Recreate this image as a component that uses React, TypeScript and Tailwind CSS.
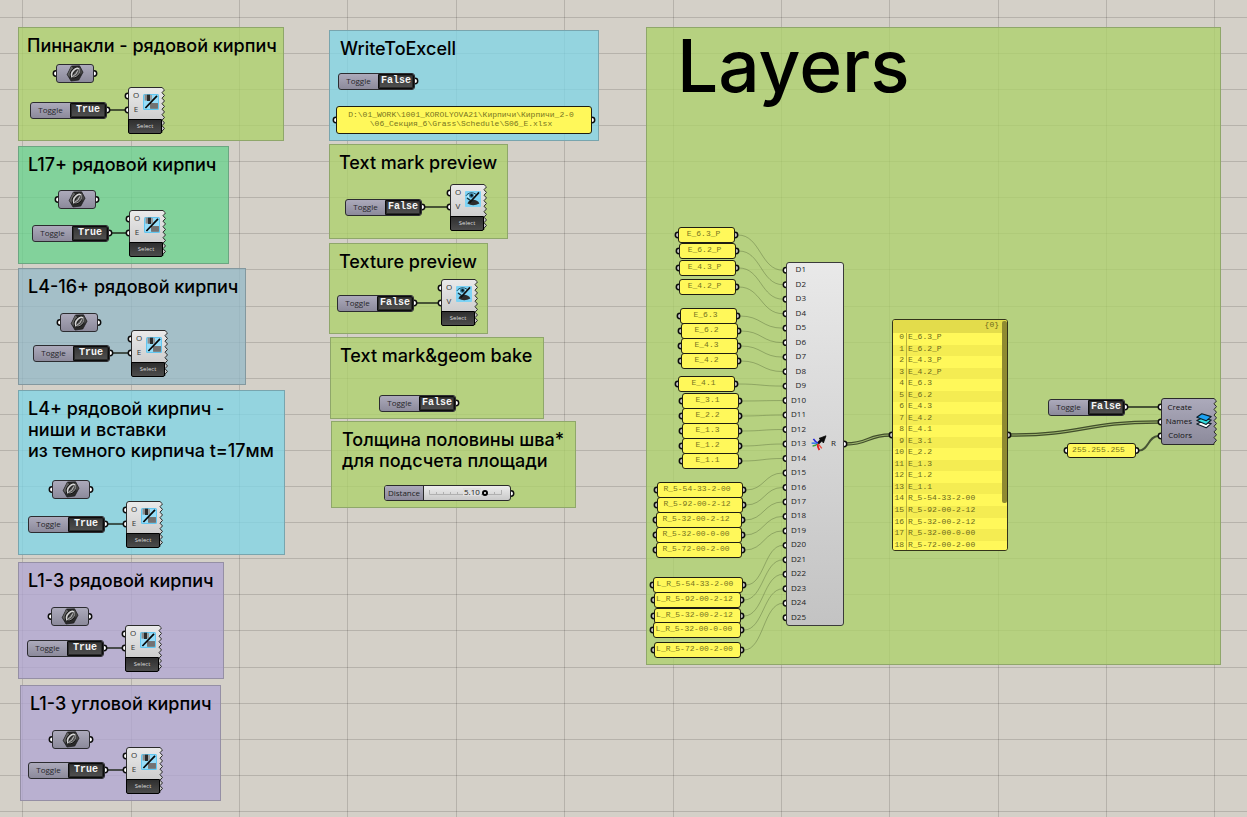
import { useState } from "react";

type Point = { x: number; y: number };
type Box = Point & { w: number; h: number };

const MONO = "font-['Liberation_Mono',monospace]";
const NODE_SANS = "font-['Open_Sans','Noto_Sans',sans-serif]";

const GREEN = "bg-[rgb(172,209,104)]/75 border-[#8fa76a]";
const AQUA = "bg-[rgb(127,213,231)]/75 border-[#78a5ae]";
const MINT = "bg-[rgb(103,211,140)]/75 border-[#6ba681]";
const STEEL = "bg-[rgb(148,185,200)]/75 border-[#83989f]";
const VIOLET = "bg-[rgb(176,165,211)]/75 border-[#958fa5]";

type Group = Box & { tone: string; pad: string; lines: string[] };

const groups: Group[] = [
  { x: 18, y: 27, w: 266, h: 114, tone: GREEN, pad: "pl-2", lines: ["Пиннакли - рядовой кирпич"] },
  { x: 18, y: 146, w: 211, h: 118, tone: MINT, pad: "pl-[9px]", lines: ["L17+ рядовой кирпич"] },
  { x: 18, y: 268, w: 228, h: 117, tone: STEEL, pad: "pl-[9px]", lines: ["L4-16+ рядовой кирпич"] },
  {
    x: 18, y: 390, w: 267, h: 165, tone: AQUA, pad: "pl-[9px]",
    lines: ["L4+ рядовой кирпич -", "ниши и вставки", "из темного кирпича t=17мм"],
  },
  { x: 18, y: 562, w: 206, h: 117, tone: VIOLET, pad: "pl-[9px]", lines: ["L1-3 рядовой кирпич"] },
  { x: 20, y: 685, w: 201, h: 116, tone: VIOLET, pad: "pl-[9px]", lines: ["L1-3 угловой кирпич"] },
  { x: 329, y: 30, w: 270, h: 111, tone: AQUA, pad: "pl-2.5", lines: ["WriteToExcell"] },
  { x: 329, y: 144, w: 179, h: 95, tone: GREEN, pad: "pl-[9px]", lines: ["Text mark preview"] },
  { x: 329, y: 243, w: 159, h: 91, tone: GREEN, pad: "pl-[9px]", lines: ["Texture preview"] },
  { x: 330, y: 337, w: 214, h: 82, tone: GREEN, pad: "pl-[9px]", lines: ["Text mark&geom bake"] },
  { x: 331, y: 421, w: 245, h: 87, tone: GREEN, pad: "pl-2.5", lines: ["Толщина половины шва*", "для подсчета площади"] },
];

const layersGroup: Box = { x: 646, y: 27, w: 575, h: 638 };

const TOGGLE = { w: 77, h: 17 };
const toggles: (Point & { on: boolean })[] = [
  { x: 30, y: 102, on: true },
  { x: 32, y: 225, on: true },
  { x: 33, y: 345, on: true },
  { x: 28, y: 516, on: true },
  { x: 27, y: 640, on: true },
  { x: 28, y: 762, on: true },
  { x: 338, y: 73, on: false },
  { x: 345, y: 199, on: false },
  { x: 337, y: 295, on: false },
  { x: 379, y: 395, on: false },
  { x: 1048, y: 399, on: false },
];

const GEOMETRY = { w: 38, h: 19 };
const geometryParams: Point[] = [
  { x: 56, y: 64 },
  { x: 58, y: 190 },
  { x: 60, y: 313 },
  { x: 52, y: 480 },
  { x: 51, y: 607 },
  { x: 52, y: 730 },
];

type Kind = "enable" | "preview";
const selectors: (Point & { kind: Kind; toggle: number })[] = [
  { x: 128, y: 87, kind: "enable", toggle: 0 },
  { x: 129, y: 210, kind: "enable", toggle: 1 },
  { x: 131, y: 330, kind: "enable", toggle: 2 },
  { x: 126, y: 501, kind: "enable", toggle: 3 },
  { x: 125, y: 625, kind: "enable", toggle: 4 },
  { x: 126, y: 747, kind: "enable", toggle: 5 },
  { x: 450, y: 184, kind: "preview", toggle: 7 },
  { x: 441, y: 279, kind: "preview", toggle: 8 },
];

const panels: (Point & { w: number; text: string })[] = [
  { x: 678, y: 227, w: 57, text: "E_6.3_P" },
  { x: 679, y: 243, w: 57, text: "E_6.2_P" },
  { x: 679, y: 260, w: 57, text: "E_4.3_P" },
  { x: 679, y: 279, w: 57, text: "E_4.2_P" },
  { x: 680, y: 308, w: 57, text: "E_6.3" },
  { x: 681, y: 323, w: 57, text: "E_6.2" },
  { x: 681, y: 338, w: 57, text: "E_4.3" },
  { x: 681, y: 353, w: 57, text: "E_4.2" },
  { x: 678, y: 376, w: 57, text: "E_4.1" },
  { x: 682, y: 393, w: 57, text: "E_3.1" },
  { x: 682, y: 408, w: 57, text: "E_2.2" },
  { x: 682, y: 423, w: 57, text: "E_1.3" },
  { x: 682, y: 438, w: 57, text: "E_1.2" },
  { x: 682, y: 453, w: 57, text: "E_1.1" },
  { x: 657, y: 482, w: 86, text: "R_5-54-33-2-00" },
  { x: 657, y: 497, w: 86, text: "R_5-92-00-2-12" },
  { x: 656, y: 512, w: 86, text: "R_5-32-00-2-12" },
  { x: 656, y: 527, w: 86, text: "R_5-32-00-0-00" },
  { x: 656, y: 542, w: 86, text: "R_5-72-00-2-00" },
  { x: 653, y: 577, w: 90, text: "L_R_5-54-33-2-00" },
  { x: 654, y: 592, w: 87, text: "L_R_5-92-00-2-12" },
  { x: 654, y: 608, w: 87, text: "L_R_5-32-00-2-12" },
  { x: 653, y: 622, w: 88, text: "L_R_5-32-00-0-00" },
  { x: 654, y: 642, w: 87, text: "L_R_5-72-00-2-00" },
];

const merge: Box = { x: 786, y: 262, w: 58, h: 364 };
const INPUTS = 25;
const inputY = (i: number) => merge.y + 1 + ((merge.h - 2) / INPUTS) * (i + 0.5);

const listPanel: Box = { x: 892, y: 319, w: 116, h: 232 };
const listItems = panels.slice(0, 19).map((p) => p.text);

const pathPanel: Box = { x: 336, y: 106, w: 256, h: 28 };
const colorPanel: Box = { x: 1067, y: 443, w: 69, h: 15 };
const slider: Box = { x: 384, y: 485, w: 127, h: 16 };
const layerNode: Box = { x: 1161, y: 398, w: 53, h: 47 };

const place = (b: Point & { w?: number; h?: number }) => ({ left: b.x, top: b.y, width: b.w, height: b.h });

function curve(a: Point, b: Point) {
  const d = (b.x - a.x) / 2;
  return `M${a.x} ${a.y}C${a.x + d} ${a.y} ${b.x - d} ${b.y} ${b.x} ${b.y}`;
}

function tornEdge(w: number, h: number, teeth: number) {
  const step = (h - 2) / teeth;
  let d = `M3 .5H${w}`;
  for (let i = 0; i < teeth; i++) {
    d += `L${w + 2.5} ${1 + step * (i + 0.35)}L${w} ${1 + step * (i + 0.85)}`;
  }
  return `${d}L${w} ${h - 0.5}H3Q.5 ${h - 0.5} .5 ${h - 3}V3Q.5 .5 3 .5Z`;
}

function Grid() {
  const cols = Array.from({ length: 24 }, (_, i) => Math.round(22.3 + i * 108.38));
  const rows = Array.from({ length: 45 }, (_, i) => Math.round(16.7 + i * 36.1));
  return (
    <svg className="absolute inset-0 h-full w-full" aria-hidden="true" shapeRendering="crispEdges">
      <g fill="#000" fillOpacity="0.14">
        {cols.map((x) => <rect key={x} x={x} y="0" width="1" height="100%" />)}
        {rows.map((y) => <rect key={y} x="0" y={y} width="100%" height="1" />)}
      </g>
    </svg>
  );
}

function Port({ x, y, dim }: Point & { dim?: boolean }) {
  return <circle cx={x} cy={y} r="2.7" fill={dim ? "#c4c4c4" : "#fff"} stroke="#0c0c0c" strokeWidth="1.5" />;
}

function Wires() {
  const thick = (d: string) => <path key={d} d={d} stroke="#1c2418" strokeOpacity="0.72" strokeWidth="2" />;
  const double = (d: string) => (
    <g key={d}>
      <path d={d} stroke="#414e2b" strokeWidth="3.4" />
      <path d={d} stroke="#9db56d" strokeWidth="1.1" />
    </g>
  );
  const mergeOut = { x: merge.x + merge.w, y: 444 };
  const listY = 435;
  return (
    <svg className="absolute inset-0 h-full w-full" aria-hidden="true" fill="none">
      {panels.map((p, i) => (
        <path
          key={p.text + i}
          d={curve({ x: p.x + p.w + 3, y: p.y + 8 }, { x: merge.x - 3, y: inputY(i) })}
          stroke="#3c4a24"
          strokeOpacity="0.32"
        />
      ))}
      {selectors.map((s) => {
        const t = toggles[s.toggle];
        return thick(curve({ x: t.x + TOGGLE.w + 3, y: t.y + 8 }, { x: s.x - 2, y: t.y + 8 }));
      })}
      {double(curve({ x: mergeOut.x + 2, y: 444 }, { x: listPanel.x - 2, y: listY }))}
      {double(curve({ x: listPanel.x + listPanel.w + 2, y: listY }, { x: layerNode.x - 3, y: 422 }))}
      {thick(curve({ x: 1128, y: 407 }, { x: layerNode.x - 3, y: 407 }))}
      {thick(curve({ x: 1139, y: 450.5 }, { x: layerNode.x - 3, y: 436 }))}

      {toggles.map((t) => <Port key={`${t.x}-${t.y}`} x={t.x + TOGGLE.w} y={t.y + 8} />)}
      {geometryParams.map((g) => (
        <g key={g.y}>
          <Port x={g.x} y={g.y + 9.5} />
          <Port x={g.x + GEOMETRY.w} y={g.y + 9.5} />
        </g>
      ))}
      {selectors.map((s) => (
        <g key={s.y}>
          <Port x={s.x} y={s.y + 9} />
          <Port x={s.x} y={toggles[s.toggle].y + 8} />
        </g>
      ))}
      {panels.map((p) => (
        <g key={p.y}>
          <Port x={p.x} y={p.y + 8} dim />
          <Port x={p.x + p.w} y={p.y + 8} dim />
        </g>
      ))}
      {Array.from({ length: INPUTS }, (_, i) => <Port key={i} x={merge.x} y={inputY(i)} />)}
      <Port x={mergeOut.x} y={444} />
      <Port x={listPanel.x} y={listY} dim />
      <Port x={listPanel.x + listPanel.w} y={listY} dim />
      <Port x={pathPanel.x} y={120} />
      <Port x={pathPanel.x + pathPanel.w} y={120} />
      <Port x={colorPanel.x} y={450.5} />
      <Port x={colorPanel.x + colorPanel.w} y={450.5} />
      <Port x={slider.x + slider.w} y={493.5} />
      {[407, 422, 436].map((y) => <Port key={y} x={layerNode.x} y={y} />)}
    </svg>
  );
}

function GroupBox({ group }: { group: Group }) {
  return (
    <section className={`absolute border pt-[7px] ${group.tone} ${group.pad}`} style={place(group)}>
      <h2 className="whitespace-nowrap text-[18px] font-medium leading-[21px] text-black">
        {group.lines.map((line) => <span key={line} className="block">{line}</span>)}
      </h2>
    </section>
  );
}

function Toggle({ x, y, on }: Point & { on: boolean }) {
  const [value, setValue] = useState(on);
  const id = `toggle-${x}-${y}`;
  return (
    <div
      className="absolute flex items-stretch rounded-[3px] border border-[#2c2c30] bg-linear-to-b from-[#acaabb] to-[#8c8a9b]"
      style={place({ x, y, ...TOGGLE })}
    >
      <label htmlFor={id} className={`flex flex-1 items-center justify-center pb-[2px] text-[8px] leading-none text-[#26262a] ${NODE_SANS}`}>
        Toggle
      </label>
      <button
        id={id}
        type="button"
        aria-pressed={value}
        onClick={() => setValue(!value)}
        className={`flex w-[36px] items-center justify-center rounded-r-[2px] border border-[#0c0c0c] bg-linear-to-b from-[#363636] to-[#505050] pb-px text-[10px] font-bold leading-none text-[#f4f4f4] inset-ring inset-ring-[#2a2a2a] ${MONO}`}
      >
        {value ? "True" : "False"}
      </button>
    </div>
  );
}

function HexNutIcon() {
  return (
    <svg viewBox="0 0 18 17" className="h-[17px] w-[18px]" aria-hidden="true">
      <path d="M5.4 1 13.6 .8 17 7.2 12.8 15 5 16 1.2 9.6Z" fill="#2a2a2a" stroke="#1a1a1a" strokeWidth=".7" strokeLinejoin="round" />
      <path d="M5.4 1.2 1.6 9.4 3.4 12 7.4 3.4Z" fill="#646464" />
      <path d="M13.4 1.2 16.6 7.2 14.6 9.6 13 4Z" fill="#474747" />
      <ellipse cx="9" cy="7.9" rx="6.1" ry="4.5" transform="rotate(-46 9 7.9)" fill="#0e0e0e" />
      <ellipse cx="9.4" cy="7.6" rx="5.1" ry="3.4" transform="rotate(-46 9.4 7.6)" fill="#4e4e4e" stroke="#a4a4a4" strokeWidth=".8" />
      <path d="M5.8 12Q4.6 8.4 7.8 5.2 10.6 2.4 12.8 3.6" fill="none" stroke="#d6d6d6" strokeWidth="1.3" strokeLinecap="round" />
      <path d="M7.2 10.8Q10.4 10 11.8 5.4" fill="none" stroke="#c2c2c2" strokeWidth="1" />
      <path d="M7.2 9.2Q8 6.4 10.8 5" fill="none" stroke="#1c1c1c" strokeWidth="1" />
    </svg>
  );
}

function GeometryParam(p: Point) {
  return (
    <div
      className="absolute flex items-center justify-center rounded-[3px] border border-[#2c2c30] bg-linear-to-b from-[#acaabb] to-[#8c8a9b] pr-px"
      style={place({ ...p, ...GEOMETRY })}
    >
      <HexNutIcon />
    </div>
  );
}

function EnableIcon() {
  return (
    <svg viewBox="0 0 16 16" className="size-4" aria-hidden="true">
      <rect width="16" height="16" rx="1.5" fill="#62c6f0" />
      <rect x="1" y="1" width="14" height="14" rx="1" fill="#96ddf9" />
      <rect x="1.6" y="0.6" width="2.4" height="6" fill="#8a8a8a" />
      <rect x="4" y="0.6" width="3.2" height="6.4" fill="#2b2b2b" />
      <rect x="7.2" y="1" width="1.8" height="5" fill="#9e9e9e" />
      <rect x="7" y="9" width="8" height="5.8" fill="#7a7a7a" />
      <path d="M9 9v6M11 9v6M13 9v6M7 11h8M7 13h8" stroke="#686868" strokeWidth=".5" />
      <path d="M2.4 14 14 1.8" stroke="#060606" strokeWidth="1.7" />
    </svg>
  );
}

function PreviewIcon() {
  return (
    <svg viewBox="0 0 16 16" className="size-4" aria-hidden="true">
      <rect width="16" height="16" rx="1" fill="#7dd3f5" />
      <path d="M1 4.8C3 1.4 8.4 .8 11.6 3.8" fill="none" stroke="#1c4454" strokeWidth="1" />
      <path d="M1.6 5.4Q6 9 10.4 5.6L9 2.8Q4.6 1.8 1.6 5.4Z" fill="#b9eafb" />
      <circle cx="6.4" cy="4.6" r="2.5" fill="#3a88ab" />
      <circle cx="6.6" cy="4.4" r="1.3" fill="#05141c" />
      <path d="M2.4 12.4Q4 9 8 8.8 12.4 9 14.4 12.4 8 16 2.4 12.4Z" fill="#2c2c2c" />
      <path d="M2 7Q5 10 9 10.4" fill="none" stroke="#17303a" strokeWidth="1.2" />
      <path d="M4.6 11.6 14 1.4" stroke="#101010" strokeWidth="1.6" />
    </svg>
  );
}

function Selector({ x, y, kind }: Point & { kind: Kind }) {
  return (
    <div className="absolute h-[47px] w-[37px]" style={place({ x, y })}>
      <svg viewBox="0 0 37 47" className="absolute inset-0 h-full w-full" aria-hidden="true">
        <defs>
          <linearGradient id="body" x1="0" x2="0" y1="0" y2="1">
            <stop offset="0" stopColor="#eaeaea" />
            <stop offset="1" stopColor="#c2c2c2" />
          </linearGradient>
        </defs>
        <path d={tornEdge(34, 46, 8)} fill="url(#body)" stroke="#2a2a2a" strokeWidth="1" />
      </svg>
      <div className="relative flex h-8 items-center gap-[3px] pb-[3px] pl-[4px]">
        <div className={`flex w-[8px] flex-col items-center text-[8px] leading-[14px] text-[#333] ${NODE_SANS}`}>
          <span>O</span>
          <span>{kind === "enable" ? "E" : "V"}</span>
        </div>
        {kind === "enable" ? <EnableIcon /> : <PreviewIcon />}
      </div>
      <button
        type="button"
        className={`relative flex h-[15px] w-[34px] items-center justify-center rounded-b-[2px] border border-black bg-linear-to-b from-[#2f2f2f] to-[#4c4c4c] pb-[2px] text-[6px] leading-none text-[#dcdcdc] ${NODE_SANS}`}
      >
        Select
      </button>
    </div>
  );
}

function Panel({ box, lines }: { box: Point & { w: number; h: number }; lines: string[] }) {
  return (
    <div
      className={`absolute flex flex-col items-center justify-center whitespace-nowrap rounded-[3px] border border-[#1e1e12] bg-[#fff85a] pb-[3px] pr-1.5 text-[8px] leading-[9px] text-[#77741f] ${MONO}`}
      style={place(box)}
    >
      {lines.map((l) => <span key={l}>{l}</span>)}
    </div>
  );
}

function SpreadIcon() {
  return (
    <svg viewBox="0 0 16 16" className="size-4" aria-hidden="true" fill="none">
      <path d="M6.4 9 11.4 4" stroke="#0a0a0a" strokeWidth="2.6" />
      <path d="M8 3.4 15 .8 12.4 8 10.8 5.8Z" fill="#0a0a0a" stroke="#0a0a0a" strokeWidth=".8" />
      <path d="M7 8.4Q4.4 7 2.4 3.8" stroke="#2222d8" strokeWidth="1.6" />
      <path d="M6.8 8.8Q3.4 7.8 .6 8.2" stroke="#3d7fe8" strokeWidth="1.6" />
      <path d="M6.6 9Q4.6 10.6 1.6 11" stroke="#35a335" strokeWidth="1.3" />
      <path d="M6.8 9Q6.4 12 8.4 15" stroke="#e02020" strokeWidth="1.9" />
      <path d="M7 9Q8.8 10.6 10.8 13.4" stroke="#ea4b3c" strokeWidth="1.3" />
    </svg>
  );
}

function MergeNode() {
  return (
    <div
      className={`absolute flex rounded-[3px] border border-[#3a3a3a] bg-linear-to-b from-[#e9e9e9] to-[#c3c3c3] text-[8px] leading-none text-[#222] ${NODE_SANS}`}
      style={place(merge)}
    >
      <ul className="flex w-[19px] flex-col text-right">
        {Array.from({ length: INPUTS }, (_, i) => (
          <li key={i} className="flex min-h-0 flex-1 items-center justify-end pb-[2px]">{`D${i + 1}`}</li>
        ))}
      </ul>
      <div className="flex flex-1 items-center gap-1 pb-[2px] pl-[5px]">
        <SpreadIcon />
        <span>R</span>
      </div>
    </div>
  );
}

function ListPanel() {
  return (
    <div
      className={`absolute overflow-hidden rounded-[3px] border border-[#33331a] bg-[#fff85a] text-[8px] leading-none text-[#6d6a1c] ${MONO}`}
      style={place(listPanel)}
    >
      <div className="h-[13px] bg-[#e3dc4b] pr-2 text-right leading-[10px]">{"{0}"}</div>
      <ol className="flex h-[219px] flex-col">
        {listItems.map((item, i) => (
          <li key={i} className="flex min-h-0 flex-1 odd:bg-[#fff85a] even:bg-[#f4ec52]">
            <span className="w-[14px] border-r border-[#b5af3c] pr-[2px] text-right">{i}</span>
            <span className="whitespace-nowrap pl-px">{item}</span>
          </li>
        ))}
      </ol>
      <div className="absolute right-0 top-px h-[182px] w-[5px] rounded-[2px] bg-[#8f8a31]" />
    </div>
  );
}

function SliderNode() {
  const [value, setValue] = useState(5.1);
  return (
    <div
      className={`absolute flex overflow-hidden rounded-[3px] border border-[#2a2a2a] bg-linear-to-b from-[#ededed] to-[#c9c9c9] text-[8px] leading-none text-[#222] ${NODE_SANS}`}
      style={place(slider)}
    >
      <label
        htmlFor="distance"
        className="flex w-[39px] items-center justify-center border-r border-[#2a2a2a] bg-linear-to-b from-[#acaabb] to-[#8c8a9b] pb-px"
      >
        Distance
      </label>
      <div className="relative flex flex-1 items-center pl-[3px]">
        <svg viewBox="0 0 73 6" className="absolute left-[5px] top-1 h-[6px] w-[73px]" aria-hidden="true">
          <path d="M.5 0V4.5H72.5V0M7.5 4V2M14.5 4V2M21.5 4V2M28.5 4V2M65.5 4V2" fill="none" stroke="#b0b0b0" />
        </svg>
        <output htmlFor="distance" className="absolute left-[39px] top-[2px] bg-[#dfdfdf] px-px">{value.toFixed(2)}</output>
        <input
          id="distance"
          type="range"
          min={0}
          max={6.8}
          step={0.1}
          value={value}
          onChange={(e) => setValue(Number(e.target.value))}
          className="relative h-3 w-[79px] appearance-none bg-transparent [&::-webkit-slider-thumb]:size-[6px] [&::-webkit-slider-thumb]:appearance-none [&::-webkit-slider-thumb]:rounded-full [&::-webkit-slider-thumb]:border-2 [&::-webkit-slider-thumb]:border-black [&::-webkit-slider-thumb]:bg-white"
        />
      </div>
    </div>
  );
}

function LayersIcon() {
  return (
    <svg viewBox="0 0 16 16" className="size-4" aria-hidden="true" strokeLinejoin="round" stroke="#0b1c26">
      <path d="M.8 11 5.6 8.8 15.2 10.6 10.2 14.8Z" fill="#fff" strokeWidth="1.1" />
      <path d="M.8 7.4 5.6 5.2 15.2 7 10.2 11.4Z" fill="#35e0e0" strokeWidth="1.1" />
      <path d="M.8 4.2 5.8 .8 15.2 3.6 10.2 7.8Z" fill="#1ba1f2" strokeWidth="1.1" />
    </svg>
  );
}

function LayerNode() {
  return (
    <div className="absolute" style={place({ ...layerNode, w: 56 })}>
      <svg viewBox="0 0 56 47" className="absolute inset-0 h-full w-full" aria-hidden="true">
        <defs>
          <linearGradient id="layer-body" x1="0" x2="0" y1="0" y2="1">
            <stop offset="0" stopColor="#acaabb" />
            <stop offset="1" stopColor="#8c8a9b" />
          </linearGradient>
        </defs>
        <path d={tornEdge(53, 47, 8)} fill="url(#layer-body)" stroke="#2a2a2a" strokeWidth="1" />
      </svg>
      <div className="relative flex h-full items-center gap-1 pb-[2px]">
        <ul className={`flex w-[31px] flex-col text-right text-[8px] leading-[14px] text-[#111] ${NODE_SANS}`}>
          <li>Create</li>
          <li>Names</li>
          <li>Colors</li>
        </ul>
        <LayersIcon />
      </div>
    </div>
  );
}

export default function App() {
  return (
    <main className="relative min-h-screen w-full overflow-hidden bg-[#d4d0c8] font-[Inter,sans-serif]">
      <Grid />
      {groups.map((g) => <GroupBox key={`${g.x}-${g.y}`} group={g} />)}
      <section className={`absolute border pl-[30px] ${GREEN}`} style={place(layersGroup)}>
        <h1 className="text-[73px] font-medium leading-[76px] text-black">Layers</h1>
      </section>

      <Wires />

      {geometryParams.map((g) => <GeometryParam key={g.y} {...g} />)}
      {toggles.map((t) => <Toggle key={`${t.x}-${t.y}`} {...t} />)}
      {selectors.map((s) => <Selector key={s.y} x={s.x} y={s.y} kind={s.kind} />)}

      <Panel
        box={pathPanel}
        lines={["D:\\01_WORK\\1001_KOROLYOVA21\\Кирпичи\\Кирпичи_2-0", "\\06_Секция_6\\Grass\\Schedule\\S06_E.xlsx"]}
      />
      <SliderNode />

      {panels.map((p) => <Panel key={p.y} box={{ ...p, h: 16 }} lines={[p.text]} />)}
      <MergeNode />
      <ListPanel />
      <Panel box={colorPanel} lines={["255.255.255"]} />
      <LayerNode />
    </main>
  );
}
